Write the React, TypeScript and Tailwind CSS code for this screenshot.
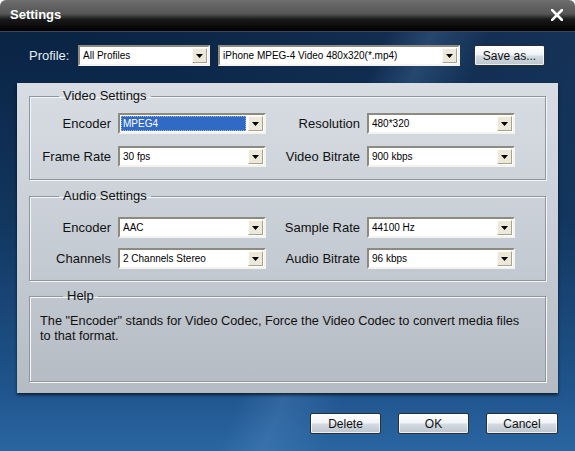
import React from "react";

function Arrow() {
  return (
    <svg width="7" height="4" viewBox="0 0 7 4" className="block">
      <path d="M0 0H7L3.5 4Z" fill="#000" />
    </svg>
  );
}

function Combo({ value, w, selected }: { value: string; w: string; selected?: boolean }) {
  return (
    <div
      className={`${w} flex h-[21px] shrink-0 items-stretch border-2 border-t-[#8d8a7f] border-l-[#8d8a7f] border-b-[#f4f3ee] border-r-[#f4f3ee] bg-white`}
    >
      <div className="flex min-w-0 flex-1 items-stretch p-[1px]">
        {selected ? (
          <div className="flex flex-1 items-center border border-dotted border-[#9ab6e0] bg-[#316ac5] pl-[1px] text-[10px] leading-none text-white">
            {value}
          </div>
        ) : (
          <div className="flex flex-1 items-center pl-[2px] text-[10px] leading-none text-black">{value}</div>
        )}
      </div>
      <div className="m-[1px] flex w-[15px] items-center justify-center border border-t-[#fdfcf8] border-l-[#fdfcf8] border-b-[#a6a394] border-r-[#a6a394] bg-[#ece9d8]">
        <Arrow />
      </div>
    </div>
  );
}

function Field({ label, lw, value, selected }: { label: string; lw: string; value: string; selected?: boolean }) {
  return (
    <div className="flex items-center">
      <div className={`${lw} pr-[7px] text-right text-[13px] leading-none text-[#111]`}>{label}</div>
      <Combo value={value} w="w-[148px]" selected={selected} />
    </div>
  );
}

function Btn({ children, w }: { children: React.ReactNode; w: string }) {
  return (
    <div
      className={`${w} flex h-[21px] items-center justify-center rounded-[2px] border border-[#2b2f33] bg-[linear-gradient(180deg,#ffffff_0%,#f1f4f7_45%,#d3dae1_55%,#bcc5cd_100%)] text-[12px] leading-none text-[#111] shadow-[inset_0_0_0_1px_rgba(255,255,255,0.7)]`}
    >
      {children}
    </div>
  );
}

const fs =
  "border border-[#8f969e] shadow-[inset_1px_1px_0_#f4f6f8,1px_1px_0_#f4f6f8] min-w-0";

export default function App() {
  return (
    <div className="h-[451px] w-[575px] overflow-hidden bg-white font-['Liberation_Sans',Arial,sans-serif]">
      <div className="flex h-full flex-col overflow-hidden rounded-t-[6px]">
        {/* title bar */}
        <div className="flex h-[32px] shrink-0 items-center justify-between border-b border-b-[#3a4a5c] bg-[linear-gradient(180deg,#6e6e6e_0%,#555_45%,#1a1a1a_62%,#000_100%)] pl-[10px] pr-[12px]">
          <div className="pb-[2px] text-[13px] font-bold leading-none text-white">Settings</div>
          <svg width="12" height="12" viewBox="0 0 12 12" className="mb-[2px] block">
            <path d="M1 1L11 11M11 1L1 11" stroke="#fff" strokeWidth="2.6" strokeLinecap="square" />
          </svg>
        </div>

        {/* body */}
        <div className="flex flex-1 flex-col bg-[linear-gradient(112deg,transparent_0%,transparent_52%,rgba(110,160,215,0.22)_58%,transparent_66%),linear-gradient(200deg,rgba(90,140,200,0.14)_0%,transparent_30%),linear-gradient(180deg,#0a2343_0%,#12365f_45%,#1f548c_85%,#2a66a2_100%)] px-[17px] pt-[13px]">
          {/* profile row */}
          <div className="flex h-[21px] items-center">
            <div className="w-[61px] pl-[12px] text-[13px] leading-none text-[#e6edf4]">Profile:</div>
            <Combo value="All Profiles" w="w-[132px]" />
            <div className="w-[8px]" />
            <Combo value="iPhone MPEG-4 Video 480x320(*.mp4)" w="w-[242px]" />
            <div className="w-[14px]" />
            <Btn w="w-[71px]">Save as...</Btn>
          </div>

          {/* panel */}
          <div className="mt-[17px] flex h-[310px] flex-col bg-[linear-gradient(180deg,#d7dde3_0%,#c9cfd6_45%,#b5bbc3_100%)] px-[12px] pb-[10px] pt-[6px] shadow-[0_2px_3px_rgba(0,0,0,0.65)]">
            <fieldset className={`${fs} pb-[12px] pt-[10px]`}>
              <legend className="ml-[29px] px-[4px] text-[13px] leading-[14px] text-[#111]">Video Settings</legend>
              <div className="flex flex-col gap-[12px]">
                <div className="flex">
                  <Field label="Encoder" lw="w-[88px]" value="MPEG4" selected />
                  <Field label="Resolution" lw="w-[101px]" value="480*320" />
                </div>
                <div className="flex">
                  <Field label="Frame Rate" lw="w-[88px]" value="30 fps" />
                  <Field label="Video Bitrate" lw="w-[101px]" value="900 kbps" />
                </div>
              </div>
            </fieldset>

            <fieldset className={`${fs} mt-[9px] pb-[11px] pt-[14px]`}>
              <legend className="ml-[29px] px-[4px] text-[13px] leading-[14px] text-[#111]">Audio Settings</legend>
              <div className="flex flex-col gap-[10px]">
                <div className="flex">
                  <Field label="Encoder" lw="w-[88px]" value="AAC" />
                  <Field label="Sample Rate" lw="w-[101px]" value="44100 Hz" />
                </div>
                <div className="flex">
                  <Field label="Channels" lw="w-[88px]" value="2 Channels Stereo" />
                  <Field label="Audio Bitrate" lw="w-[101px]" value="96 kbps" />
                </div>
              </div>
            </fieldset>

            <fieldset className={`${fs} mt-[8px] h-[93px] pl-[10px] pt-[10px]`}>
              <legend className="ml-[23px] px-[4px] text-[13px] leading-[14px] text-[#111]">Help</legend>
              <div className="text-[12.75px] leading-[15px] text-[#111]">
                The "Encoder" stands for Video Codec, Force the Video Codec to convert media files
                <br />
                to that format.
              </div>
            </fieldset>
          </div>

          {/* buttons */}
          <div className="mt-[20px] flex justify-end gap-[17px]">
            <Btn w="w-[71px]">Delete</Btn>
            <Btn w="w-[71px]">OK</Btn>
            <Btn w="w-[72px]">Cancel</Btn>
          </div>
        </div>
      </div>
    </div>
  );
}
